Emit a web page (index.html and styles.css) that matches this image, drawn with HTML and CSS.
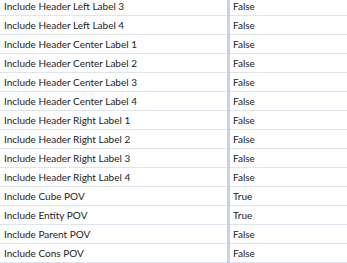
FILE: index.html
```html
<!DOCTYPE html>
<html>
<head>
<meta charset="utf-8">
<link rel="stylesheet" href="styles.css">
</head>
<body>
<div class="grid">
  <div class="row"><div class="name">Include Header Left Label 3</div><div class="value">False</div></div>
  <div class="row"><div class="name">Include Header Left Label 4</div><div class="value">False</div></div>
  <div class="row"><div class="name">Include Header Center Label 1</div><div class="value">False</div></div>
  <div class="row"><div class="name">Include Header Center Label 2</div><div class="value">False</div></div>
  <div class="row"><div class="name">Include Header Center Label 3</div><div class="value">False</div></div>
  <div class="row"><div class="name">Include Header Center Label 4</div><div class="value">False</div></div>
  <div class="row"><div class="name">Include Header Right Label 1</div><div class="value">False</div></div>
  <div class="row"><div class="name">Include Header Right Label 2</div><div class="value">False</div></div>
  <div class="row"><div class="name">Include Header Right Label 3</div><div class="value">False</div></div>
  <div class="row"><div class="name">Include Header Right Label 4</div><div class="value">False</div></div>
  <div class="row"><div class="name">Include Cube POV</div><div class="value">True</div></div>
  <div class="row"><div class="name">Include Entity POV</div><div class="value">True</div></div>
  <div class="row"><div class="name">Include Parent POV</div><div class="value">False</div></div>
  <div class="row"><div class="name">Include Cons POV</div><div class="value">False</div></div>
</div>
</body>
</html>
```

FILE: styles.css
```css
html, body {
  margin: 0;
  padding: 0;
  background: #ffffff;
  overflow: hidden;
}
.grid {
  margin-top: -3px;
  font-family: "Lato", "Open Sans", sans-serif;
  font-size: 10px;
  color: #222222;
}
.row {
  display: grid;
  grid-template-columns: 227px 3px 1fr;
  height: 18px;
  border-bottom: 1px solid #dfe5ef;
}
.row::before {
  content: "";
  grid-column: 2;
  grid-row: 1;
  background: #c6d2e6;
  margin-bottom: -1px;
}
.name {
  grid-column: 1;
  grid-row: 1;
  padding-left: 4px;
  line-height: 18px;
  white-space: nowrap;
}
.value {
  grid-column: 3;
  grid-row: 1;
  padding-left: 3px;
  line-height: 18px;
}
```
